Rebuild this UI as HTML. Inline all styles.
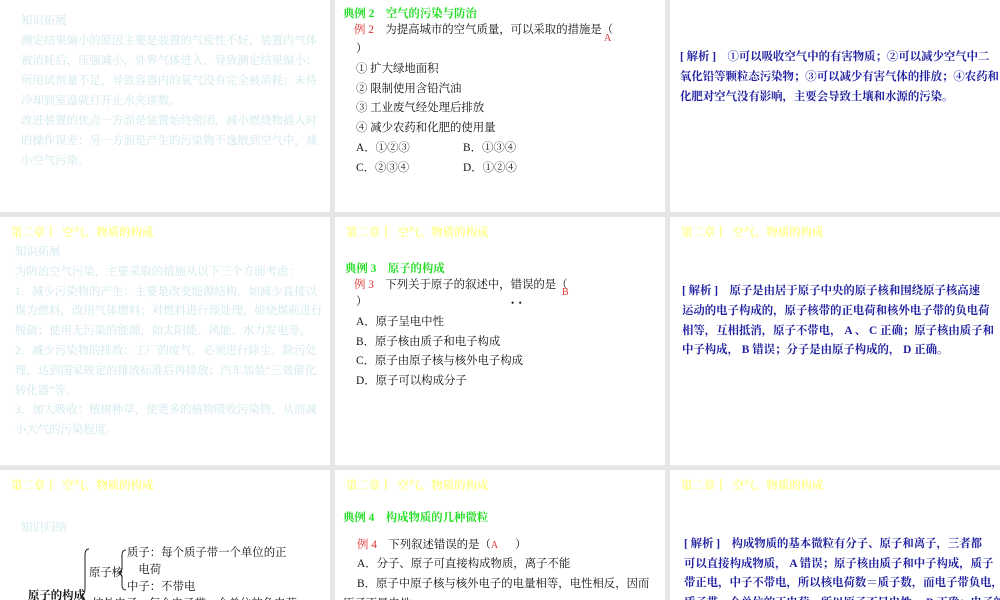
<!DOCTYPE html>
<html><head><meta charset="utf-8"><style>
body{margin:0;width:1000px;height:600px;background:#e6e6e6;position:relative;overflow:hidden;font-family:"Liberation Serif","Noto Serif CJK SC",serif;font-size:11.4px;}
.p{position:absolute;background:#fff;overflow:hidden}
.t{position:absolute;white-space:nowrap;line-height:20px}
.c{color:#cfe8ec}
.y{color:#ffff88;font-weight:bold}
.g{color:#22dd22;font-weight:bold}
.r{color:#dd3333}
.k{color:#111}
.b{color:#2020a0;font-weight:bold}
</style></head><body>
<div class="p" style="left:0;top:0;width:330px;height:212px">
<div class="t c" style="left:21px;top:11px">知识拓展<br>测定结果偏小的原因主要是装置的气密性不好，装置内气体<br>被消耗后，压强减小，外界气体进入，导致测定结果偏小；<br>所用试剂量不足，导致容器内的氧气没有完全被消耗；未待<br>冷却到室温就打开止水夹读数。<br>改进装置的优点一方面是装置始终密闭，减小燃烧物插入时<br>的操作误差；另一方面是产生的污染物不逸散到空气中，减<br>小空气污染。</div>
</div>
<div class="p" style="left:335px;top:0;width:330px;height:212px">
<div class="t g" style="left:8px;top:4px">典例 2&nbsp;&nbsp;&nbsp; 空气的污染与防治</div>
<div class="t k" style="left:19px;top:20px"><span class="r">例 2</span>&nbsp;&nbsp;&nbsp; 为提高城市的空气质量，可以采取的措施是（</div>
<div class="t r" style="left:269px;top:29px;font-size:10px">A</div>
<div class="t k" style="left:21px;top:40px;line-height:19.8px">）<br>① 扩大绿地面积<br>② 限制使用含铅汽油<br>③ 工业废气经处理后排放<br>④ 减少农药和化肥的使用量<br>A．①②③<br>C．②③④</div>
<div class="t k" style="left:128px;top:139px;line-height:19.8px">B．①③④<br>D．①②④</div>
</div>
<div class="p" style="left:670px;top:0;width:330px;height:212px">
<div class="t b" style="left:10px;top:48px;line-height:19.8px">[ 解析 ]&nbsp;&nbsp;&nbsp; ①可以吸收空气中的有害物质；②可以减少空气中二<br>氧化铅等颗粒态污染物；③可以减少有害气体的排放；④农药和<br>化肥对空气没有影响，主要会导致土壤和水源的污染。</div>
</div>
<div class="p" style="left:0;top:217px;width:330px;height:248px">
<div class="t y" style="left:11px;top:6px">第二章┃&nbsp; 空气、物质的构成</div>
<div class="t c" style="left:15px;top:26px;line-height:19.8px">知识拓展<br>为防治空气污染，主要采取的措施从以下三个方面考虑：<br>1．减少污染物的产生：主要是改变能源结构，如减少直接以<br>煤为燃料，改用气体燃料；对燃料进行预处理，如烧煤前进行<br>脱硫；使用无污染的能源，如太阳能、风能、水力发电等。<br>2．减少污染物的排放：工厂的废气，必须进行除尘、除污处<br>理，达到国家规定的排放标准后再排放；汽车加装“三效催化<br>转化器”等。<br>3．加大吸收：植树种草，使更多的植物吸收污染物，从而减<br>小大气的污染程度。</div>
</div>
<div class="p" style="left:335px;top:217px;width:330px;height:248px">
<div class="t y" style="left:11px;top:6px">第二章┃&nbsp; 空气、物质的构成</div>
<div class="t g" style="left:10px;top:42px">典例 3&nbsp;&nbsp;&nbsp; 原子的构成</div>
<div class="t k" style="left:19px;top:58px"><span class="r">例 3</span>&nbsp;&nbsp;&nbsp; 下列关于原子的叙述中，错误的是（</div>
<div class="t r" style="left:227px;top:66px;font-size:10px">B</div>
<div class="t k" style="left:176px;top:76px;font-size:9px">•&nbsp;&nbsp;•</div>
<div class="t k" style="left:21px;top:76px;line-height:19.8px">）<br>A．原子呈电中性<br>B．原子核由质子和电子构成<br>C．原子由原子核与核外电子构成<br>D．原子可以构成分子</div>
</div>
<div class="p" style="left:670px;top:217px;width:330px;height:248px">
<div class="t y" style="left:11px;top:6px">第二章┃&nbsp; 空气、物质的构成</div>
<div class="t b" style="left:12px;top:65px;line-height:19.8px">[ 解析 ]&nbsp;&nbsp;&nbsp; 原子是由居于原子中央的原子核和围绕原子核高速<br>运动的电子构成的，原子核带的正电荷和核外电子带的负电荷<br>相等，互相抵消，原子不带电， A 、 C 正确；原子核由质子和<br>中子构成， B 错误；分子是由原子构成的， D 正确。</div>
</div>
<div class="p" style="left:0;top:470px;width:330px;height:130px">
<div class="t y" style="left:11px;top:6px">第二章┃&nbsp; 空气、物质的构成</div>
<div class="t c" style="left:21px;top:48px">知识归纳</div>
<svg style="position:absolute;left:0;top:0" width="330" height="130"><path d="M89,79 Q85,79 85,85 L85,118 Q85,124 82,126 Q85,128 85,134" fill="none" stroke="#222" stroke-width="1"/><path d="M126,80 Q122,80 122,85 L122,98 Q122,102 119,103 Q122,104 122,108 L122,115 Q122,120 126,120" fill="none" stroke="#222" stroke-width="1"/></svg>
<div class="t k" style="left:89px;top:93px">原子核</div>
<div class="t k" style="left:127px;top:75px;line-height:17px">质子：每个质子带一个单位的正<br>&nbsp;&nbsp;&nbsp; 电荷<br>中子：不带电</div>
<div class="t k" style="left:28px;top:116px;font-weight:bold">原子的构成</div>
<div class="t k" style="left:92px;top:124px">核外电子：每个电子带一个单位的负电荷</div>
</div>
<div class="p" style="left:335px;top:470px;width:330px;height:130px">
<div class="t y" style="left:11px;top:6px">第二章┃&nbsp; 空气、物质的构成</div>
<div class="t g" style="left:8px;top:38px">典例 4&nbsp;&nbsp;&nbsp; 构成物质的几种微粒</div>
<div class="t k" style="left:22px;top:65px"><span class="r">例 4</span>&nbsp;&nbsp;&nbsp; 下列叙述错误的是（<span class="r" style="font-size:10px">A</span>&nbsp;&nbsp;&nbsp;&nbsp;&nbsp; ）</div>
<div class="t k" style="left:22px;top:85px;line-height:19.6px">A．分子、原子可直接构成物质，离子不能<br>B．原子中原子核与核外电子的电量相等，电性相反，因而</div>
<div class="t k" style="left:8px;top:124px">原子不显电性</div>
</div>
<div class="p" style="left:670px;top:470px;width:330px;height:130px">
<div class="t y" style="left:11px;top:6px">第二章┃&nbsp; 空气、物质的构成</div>
<div class="t b" style="left:14px;top:65px;line-height:19.6px">[ 解析 ]&nbsp;&nbsp;&nbsp; 构成物质的基本微粒有分子、原子和离子，三者都<br>可以直接构成物质， A 错误；原子核由质子和中子构成，质子<br>带正电，中子不带电，所以核电荷数＝质子数，而电子带负电，<br>质子带一个单位的正电荷，所以原子不显电性， B 正确；电子的质</div>
</div>
</body></html>
